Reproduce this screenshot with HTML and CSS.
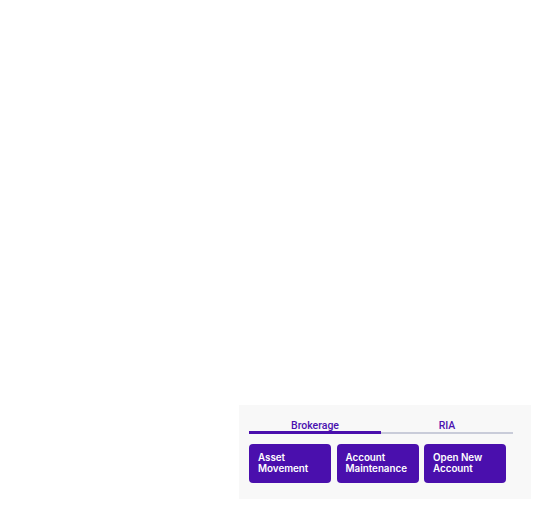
FILE: index.html
```html
<!DOCTYPE html>
<html>
<head>
<meta charset="utf-8">
<link rel="stylesheet" href="styles.css">
</head>
<body>
<div class="page">
  <div class="panel">
    <div class="tabs">
      <div class="tab active">Brokerage</div>
      <div class="tab">RIA</div>
    </div>
    <div class="actions">
      <div class="action">Asset<br>Movement</div>
      <div class="action">Account<br>Maintenance</div>
      <div class="action">Open New<br>Account</div>
    </div>
  </div>
</div>
</body>
</html>
```
FILE: styles.css
```css
html, body {
  margin: 0;
  padding: 0;
  background: #ffffff;
}
.page {
  width: 560px;
  height: 526px;
  padding: 405px 0 0 239px;
  box-sizing: border-box;
}
.panel {
  width: 292px;
  height: 94px;
  box-sizing: border-box;
  background: #f8f8f8;
  padding: 10px 18px 16px 10px;
  font-family: Inter, "Liberation Sans", sans-serif;
}
.tabs {
  display: flex;
  width: 264px;
}
.tab {
  flex: 1;
  text-align: center;
  font-family: Roboto, "Liberation Sans", sans-serif;
  font-size: 10.5px;
  font-weight: 500;
  color: #4a11b0;
  height: 17px;
  line-height: 22px;
  border-bottom: 2px solid #c9ccd9;
}
.tab.active {
  border-bottom: 3px solid #4a0fad;
  height: 16px;
}
.actions {
  display: flex;
  gap: 5.5px;
  margin-top: 10px;
}
.action {
  width: 82px;
  height: 39px;
  box-sizing: border-box;
  background: #4a0fad;
  border-radius: 4px;
  color: #ffffff;
  font-size: 9.8px;
  font-weight: 600;
  line-height: 11px;
  padding: 8px 9px 0;
}
```
